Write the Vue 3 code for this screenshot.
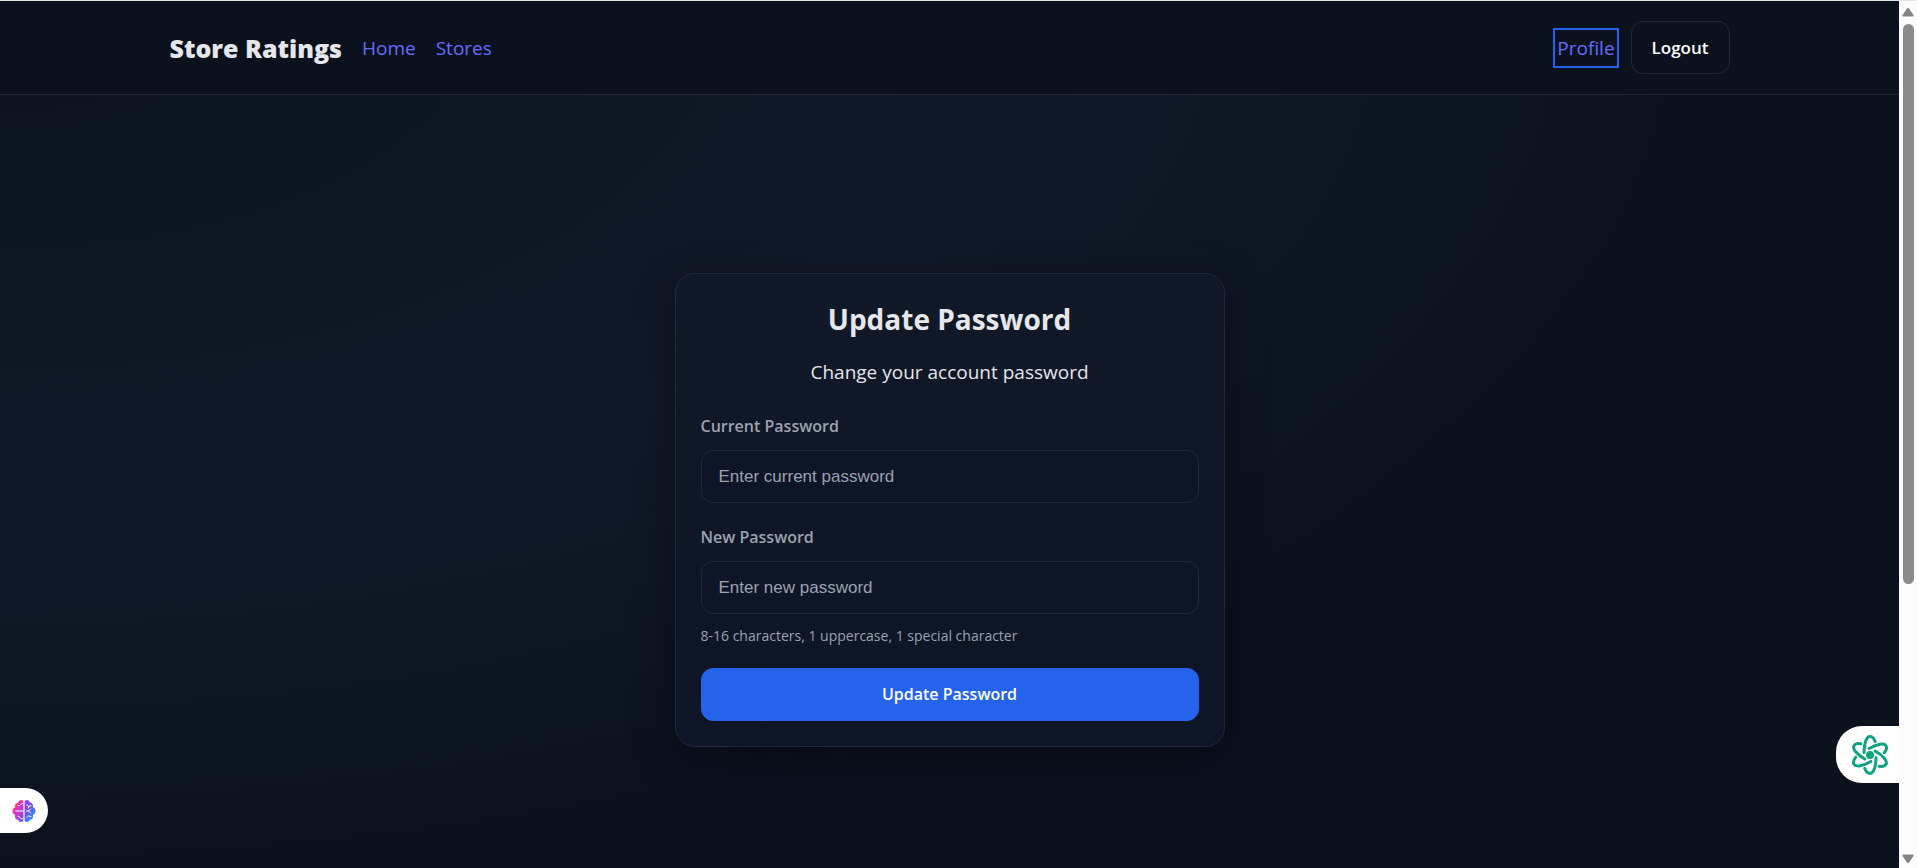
<script setup>
import { ref } from 'vue'

const currentPassword = ref('')
const newPassword = ref('')
</script>

<template>
  <div class="window">
    <div class="page">
      <header class="topbar">
        <nav class="container">
          <div class="group start">
            <span class="brand">Store Ratings</span>
            <a href="#home">Home</a>
            <a href="#stores">Stores</a>
          </div>
          <div class="group">
            <a class="focused" href="#profile">Profile</a>
            <button class="logout" type="button">Logout</button>
          </div>
        </nav>
      </header>

      <main class="content">
        <form class="card" @submit.prevent>
          <h1>Update Password</h1>
          <p class="lead">Change your account password</p>
          <div class="field">
            <label for="current">Current Password</label>
            <input id="current" v-model="currentPassword" type="password" placeholder="Enter current password">
          </div>
          <div class="field">
            <label for="next">New Password</label>
            <input id="next" v-model="newPassword" type="password" placeholder="Enter new password" aria-describedby="hint">
            <small id="hint">8-16 characters, 1 uppercase, 1 special character</small>
          </div>
          <button class="submit" type="submit">Update Password</button>
        </form>
      </main>

      <button class="tab tab-left" type="button" aria-label="Brain assistant">
        <svg width="24" height="24" viewBox="0 0 24 24">
          <defs>
            <linearGradient id="brainLeft" x1="0" y1="0" x2="0.7" y2="1">
              <stop offset="0.1" stop-color="#ff9a1f" />
              <stop offset="0.4" stop-color="#f52fb4" />
              <stop offset="1" stop-color="#7a4df0" />
            </linearGradient>
            <linearGradient id="brainRight" x1="0" y1="0" x2="0.6" y2="1">
              <stop offset="0" stop-color="#a43be8" />
              <stop offset="0.5" stop-color="#6a55ee" />
              <stop offset="1" stop-color="#1b9bf5" />
            </linearGradient>
          </defs>
          <path fill="url(#brainLeft)" d="M11.400 3v18c0 1.200-1 2-2.300 2-1.500 0-2.600-.8-3-2.200-1.900-.2-3.200-1.500-3.200-3.300 0-.6.100-1 .3-1.500C1.500 15.300.5 13.800.5 12s1-3.300 2.700-4c-.8-2.300.6-4.300 2.900-4.500C6.500 2 7.600 1 9.100 1c1.300 0 2.300.8 2.300 2Z" />
          <path fill="url(#brainRight)" d="M12.600 3v18c0 1.200 1 2 2.300 2 1.500 0 2.600-.8 3-2.200 1.900-.2 3.200-1.500 3.200-3.300 0-.6-.1-1-.3-1.500 1.700-.7 2.700-2.200 2.700-4s-1-3.300-2.700-4c.8-2.300-.6-4.300-2.900-4.500C17.500 2 16.400 1 14.900 1c-1.300 0-2.300.8-2.300 2Z" />
          <path fill="none" stroke="#fff" stroke-linecap="round" d="M11 4.500C9.800 4.300 9 5 8.500 5.800S7 6.700 6 6.700M3.500 12H11M6 17.300c1.500 0 1.600.6 2.200 1.500S10 20 11 19.500M15 5.500l1.500 2 2.500-.8M16.500 7.500V9M14.500 12h2l2-2M16.500 12l2 2M15 18.500l1.500-1.500 2.500.5" />
        </svg>
      </button>

      <button class="tab tab-right" type="button" aria-label="Chat assistant">
        <svg width="42" height="42" viewBox="0 0 42 42" fill="none" stroke="#10a37f" stroke-width="3" stroke-linecap="round">
          <circle cx="21" cy="21" r="4" fill="#10a37f" stroke="none" />
          <g v-for="angle in [0, 60, 120, 180, 240, 300]" :key="angle" :transform="`rotate(${angle} 21 21)`">
            <path d="M15 18.500C15 9 17.500 2.500 21 2.500c2.300 0 4 2 5.200 5" />
          </g>
        </svg>
      </button>
    </div>

    <div class="scrollbar" aria-hidden="true">
      <svg width="12" height="10" viewBox="0 0 12 10"><path d="M5 1.500Q6 0 7 1.500L11.500 8Q12 9.500 10.500 9.500H1.500Q0 9.500.5 8Z" fill="#858585" /></svg>
      <div class="track"><div class="thumb"></div></div>
      <svg width="12" height="10" viewBox="0 0 12 10"><path d="M5 8.500Q6 10 7 8.500L11.500 2Q12 .5 10.500 .5H1.500Q0 .5.5 2Z" fill="#858585" /></svg>
    </div>
  </div>
</template>

<style>
body {
  margin: 0;
  background: #0b121e;
}
</style>

<style scoped>
* {
  box-sizing: border-box;
}

.window {
  display: flex;
  min-height: 100vh;
  border-top: 1px solid #dfe5e2;
  color: #e5e7eb;
  font: 19px/30px "Open Sans", "Noto Sans", sans-serif;
}

.page {
  position: relative;
  display: flex;
  flex: 1;
  flex-direction: column;
  min-width: 0;
  background: radial-gradient(ellipse 1700px 870px at 0 0, #0b121e 0%, #111827 60%, #0b121e 100%);
}

.topbar {
  padding: 20px 0;
  border-bottom: 1px solid #1f2937;
  background: #0b121e;
}

.container {
  display: flex;
  align-items: center;
  justify-content: space-between;
  max-width: 1600px;
  margin: 0 auto;
  padding: 0 20px;
}

.group {
  display: flex;
  align-items: center;
  gap: 14px;
}

.start {
  gap: 20px;
}

.brand {
  font-size: 25px;
  font-weight: 800;
}

a {
  color: #646cff;
  font-weight: 500;
  text-decoration: none;
}

.focused {
  padding: 3px 2px;
  outline: 2px solid #2563eb;
}

button {
  font: 600 17px/23px "Open Sans", "Noto Sans", sans-serif;
  cursor: pointer;
}

.logout {
  padding: 14px 20px;
  border: 1px solid #1f2937;
  border-radius: 12px;
  background: transparent;
  color: #fff;
}

.content {
  display: flex;
  flex: 1;
  align-items: center;
  justify-content: center;
  padding: 56px 20px 0;
}

.card {
  width: 100%;
  max-width: 550px;
  padding: 25px;
  border: 1px solid #1f2937;
  border-radius: 20px;
  background: linear-gradient(#111827, #0d1526);
  box-shadow: 0 12px 40px rgba(0, 0, 0, 0.35);
}

h1 {
  margin: 0 0 18px;
  font-size: 28px;
  line-height: 40px;
  text-align: center;
}

.lead {
  margin: 0 0 25px;
  text-align: center;
}

.field {
  display: flex;
  flex-direction: column;
  gap: 10px;
  margin-bottom: 20px;
}

label {
  color: #9ca3af;
  font-size: 16px;
  font-weight: 600;
  line-height: 28px;
}

input {
  width: 100%;
  padding: 15px 17px;
  border: 1px solid #1f2937;
  border-radius: 12px;
  background: #0d1526;
  color: #e5e7eb;
  font: 17px/21px "Liberation Sans", Arial, sans-serif;
}

input::placeholder {
  color: #9ca3af;
}

small {
  color: #9ca3af;
  font-size: 14px;
  line-height: 24px;
}

.submit {
  width: 100%;
  padding: 14px 20px;
  border: 1px solid #2563eb;
  border-radius: 12px;
  background: #2563eb;
  color: #fff;
  font-size: 16px;
}

.tab {
  position: absolute;
  display: flex;
  align-items: center;
  border: 0;
  background: #fff;
}

.tab-left {
  bottom: 35px;
  left: 0;
  padding: 11px 12px 10px;
  border-radius: 0 23px 23px 0;
}

.tab-right {
  right: 0;
  bottom: 85px;
  padding: 8px 8px 7px 13px;
  border-radius: 26px 0 0 26px;
}

.tab svg {
  display: block;
}

.scrollbar {
  display: flex;
  flex-direction: column;
  align-items: center;
  gap: 7px;
  width: 18px;
  padding: 6px 0 4px;
  background: #fcfcfc;
}

.track {
  display: grid;
  flex: 1;
  grid-template-rows: 68fr 32fr;
}

.thumb {
  width: 11px;
  border-radius: 6px;
  background: #8b8b8b;
}
</style>
